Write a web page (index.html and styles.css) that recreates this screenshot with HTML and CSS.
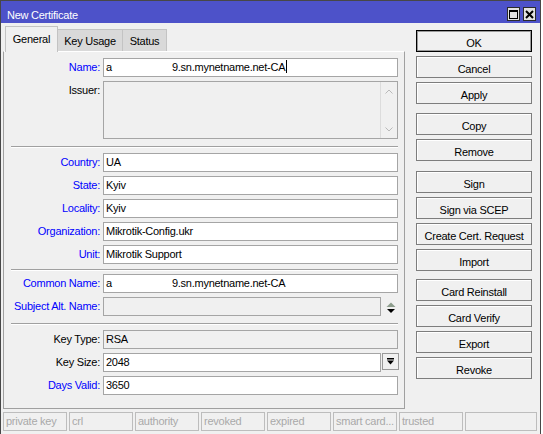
FILE: index.html
```html
<!DOCTYPE html>
<html lang="en">
<head>
    <meta charset="UTF-8">
    <title>New Certificate</title>
    <link rel="stylesheet" href="styles.css">
</head>
<body>
    <div class="window">
        <div class="titlebar">
            <span class="title">New Certificate</span>
            <div class="title-btns">
                <span class="tbtn">
                    <svg width="9" height="9" viewBox="0 0 9 9"><rect x="0.5" y="1" width="8" height="7.5" fill="none" stroke="#000" stroke-width="1"/><rect x="0" y="0" width="9" height="2" fill="#000"/></svg>
                </span>
                <span class="tbtn">
                    <svg width="9" height="9" viewBox="0 0 9 9"><path d="M1 1 L8 8 M8 1 L1 8" stroke="#000" stroke-width="2"/></svg>
                </span>
            </div>
        </div>

        <div class="main">
            <div class="left">
                <div class="tabs">
                    <div class="tab active">General</div>
                    <div class="tab tab-usage">Key Usage</div>
                    <div class="tab tab-status">Status</div>
                </div>
                <div class="panel">
                    <div class="row">
                        <span class="lbl blue">Name:</span>
                        <div class="field"><span>a</span><span class="gap"></span>9.sn.mynetname.net-CA<span class="caret"></span></div>
                    </div>
                    <div class="row row-tall">
                        <span class="lbl">Issuer:</span>
                        <div class="field off tall">
                            <div class="scroll">
                                <svg width="8" height="5" viewBox="0 0 8 5"><polyline points="0.5,4.5 4,1 7.5,4.5" fill="none" stroke="#b9b9b9" stroke-width="1"/></svg>
                                <svg width="8" height="5" viewBox="0 0 8 5"><polyline points="0.5,0.5 4,4 7.5,0.5" fill="none" stroke="#b9b9b9" stroke-width="1"/></svg>
                            </div>
                        </div>
                    </div>

                    <div class="sep"></div>

                    <div class="row">
                        <span class="lbl blue">Country:</span>
                        <div class="field">UA</div>
                    </div>
                    <div class="row">
                        <span class="lbl blue">State:</span>
                        <div class="field">Kyiv</div>
                    </div>
                    <div class="row">
                        <span class="lbl blue">Locality:</span>
                        <div class="field">Kyiv</div>
                    </div>
                    <div class="row">
                        <span class="lbl blue">Organization:</span>
                        <div class="field">Mikrotik-Config.ukr</div>
                    </div>
                    <div class="row">
                        <span class="lbl blue">Unit:</span>
                        <div class="field">Mikrotik Support</div>
                    </div>

                    <div class="sep sep-tight"></div>

                    <div class="row">
                        <span class="lbl blue">Common Name:</span>
                        <div class="field"><span>a</span><span class="gap"></span>9.sn.mynetname.net-CA</div>
                    </div>
                    <div class="row">
                        <span class="lbl blue">Subject Alt. Name:</span>
                        <div class="field off short"></div>
                        <svg class="updown" width="10" height="12" viewBox="0 0 10 12"><polygon points="0.5,5 5,0.5 9.5,5" fill="#8d9d8c"/><polygon points="1,7 9,7 5,11" fill="#000"/></svg>
                    </div>

                    <div class="sep"></div>

                    <div class="row">
                        <span class="lbl">Key Type:</span>
                        <div class="field off">RSA</div>
                    </div>
                    <div class="row">
                        <span class="lbl">Key Size:</span>
                        <div class="field short">2048</div>
                        <span class="drop">
                            <svg width="7" height="7" viewBox="0 0 7 7"><rect x="0" y="0" width="7" height="1.5" fill="#000"/><polygon points="0,2.5 7,2.5 3.5,6.5" fill="#000"/></svg>
                        </span>
                    </div>
                    <div class="row">
                        <span class="lbl blue">Days Valid:</span>
                        <div class="field">3650</div>
                    </div>
                </div>
            </div>

            <div class="side">
                <div class="group">
                    <button class="btn default">OK</button>
                    <button class="btn">Cancel</button>
                    <button class="btn">Apply</button>
                </div>
                <div class="group">
                    <button class="btn">Copy</button>
                    <button class="btn">Remove</button>
                </div>
                <div class="group group-sign">
                    <button class="btn">Sign</button>
                    <button class="btn">Sign via SCEP</button>
                    <button class="btn">Create Cert. Request</button>
                    <button class="btn">Import</button>
                </div>
                <div class="group group-card">
                    <button class="btn">Card Reinstall</button>
                    <button class="btn">Card Verify</button>
                    <button class="btn">Export</button>
                    <button class="btn">Revoke</button>
                </div>
            </div>
        </div>

        <div class="statusbar">
            <span class="cell">private key</span>
            <span class="cell">crl</span>
            <span class="cell">authority</span>
            <span class="cell">revoked</span>
            <span class="cell">expired</span>
            <span class="cell">smart card...</span>
            <span class="cell">trusted</span>
            <span class="cell cell-last"></span>
        </div>
    </div>
</body>
</html>
```

FILE: styles.css
```css
* {
    box-sizing: border-box;
}
body {
    margin: 0;
    background: #fff;
    font-family: "Liberation Sans", Arial, sans-serif;
    font-size: 11px;
    letter-spacing: -0.25px;
    color: #000;
}
.window {
    width: 541px;
    height: 434px;
    border: 1px solid #474747;
    border-bottom: none;
    background: #f0f0f0;
}
.titlebar {
    height: 22px;
    background: #4d52c9;
    display: flex;
    justify-content: space-between;
    align-items: flex-start;
}
.title {
    color: #fff;
    line-height: 13px;
    padding: 8px 0 0 6px;
}
.title-btns {
    display: flex;
    gap: 3px;
    padding: 6px 4px 0 0;
}
.tbtn {
    width: 13px;
    height: 14px;
    border: 1px solid #2b2b2b;
    background: #e2e2e2;
    display: flex;
    align-items: center;
    justify-content: center;
}

.main {
    display: flex;
    padding-left: 2px;
}
.left {
    width: 402px;
    padding-top: 3px;
}
.tabs {
    display: flex;
    align-items: flex-start;
    height: 25px;
    padding-left: 2px;
}
.tab {
    height: 22px;
    margin-top: 3px;
    padding-top: 5px;
    line-height: 13px;
    text-align: center;
    background: #d9d9d9;
    border: 1px solid #c3c3c3;
    border-left: none;
    border-bottom: none;
}
.tab.active {
    position: relative;
    z-index: 1;
    width: 53px;
    height: 26px;
    margin-top: 0;
    padding-top: 6px;
    background: #f0f0f0;
    border-left: 1px solid #c3c3c3;
}
.tab-usage {
    width: 65px;
}
.tab-status {
    width: 44px;
}
.panel {
    height: 358px;
    border: 1px solid #a0a0a0;
    border-top-color: #fff;
    padding-top: 6px;
}

.row {
    display: flex;
    align-items: flex-start;
    height: 19px;
}
.row + .row {
    margin-top: 4px;
}
.row-tall {
    height: 58px;
}
.lbl {
    width: 96px;
    margin-right: 3px;
    text-align: right;
    line-height: 19px;
    white-space: nowrap;
}
.blue {
    color: #0000ff;
}
.field {
    width: 295px;
    height: 19px;
    border: 1px solid #a5a5a5;
    background: #fff;
    padding-left: 2px;
    line-height: 17px;
    white-space: nowrap;
    overflow: hidden;
}
.field.off {
    background: #f0f0f0;
}
.field.short {
    width: 278px;
}
.field.tall {
    height: 58px;
    display: flex;
    justify-content: flex-end;
    padding-left: 0;
}
.gap {
    display: inline-block;
    width: 60px;
}
.caret {
    display: inline-block;
    width: 1px;
    height: 13px;
    margin-left: 1px;
    background: #000;
    vertical-align: -2px;
}
.scroll {
    width: 17px;
    border-left: 1px solid #dcdcdc;
    display: flex;
    flex-direction: column;
    justify-content: space-between;
    align-items: center;
    padding: 7px 0 6px;
}
.updown {
    margin: 5px 0 0 5px;
}
.drop {
    width: 17px;
    height: 17px;
    margin-left: 1px;
    border: 1px solid #999;
    background: #f0f0f0;
    display: flex;
    align-items: center;
    justify-content: center;
}

.sep {
    width: 387px;
    height: 2px;
    margin: 7px 0 5px 7px;
    border-top: 1px solid #a0a0a0;
    border-bottom: 1px solid #fff;
}
.sep-tight {
    margin-top: 5px;
    margin-bottom: 3px;
}

.side {
    width: 116px;
    margin-left: 11px;
    padding-top: 7px;
}
.group {
    display: flex;
    flex-direction: column;
    gap: 4px;
}
.group + .group {
    margin-top: 9px;
}
.group.group-sign {
    margin-top: 10px;
}
.group.group-card {
    margin-top: 8px;
}
.btn {
    display: block;
    width: 100%;
    height: 22px;
    padding: 3px 0 0;
    line-height: 16px;
    font: inherit;
    letter-spacing: inherit;
    color: #000;
    background: #f0f0f0;
    border: 1px solid #7d7d7d;
    box-shadow: inset 1px 1px 0 #fff;
    border-radius: 0;
}
.btn.default {
    border-color: #000;
    box-shadow: inset 0 0 0 1px #9a9a9a;
}

.statusbar {
    display: flex;
    gap: 2px;
    margin-top: 3px;
    padding-left: 2px;
}
.cell {
    width: 64px;
    height: 19px;
    border: 1px solid #bdbdbd;
    padding-left: 2px;
    line-height: 17px;
    color: #a9a9a9;
    white-space: nowrap;
    overflow: hidden;
}
.cell-last {
    width: 72px;
}
```
